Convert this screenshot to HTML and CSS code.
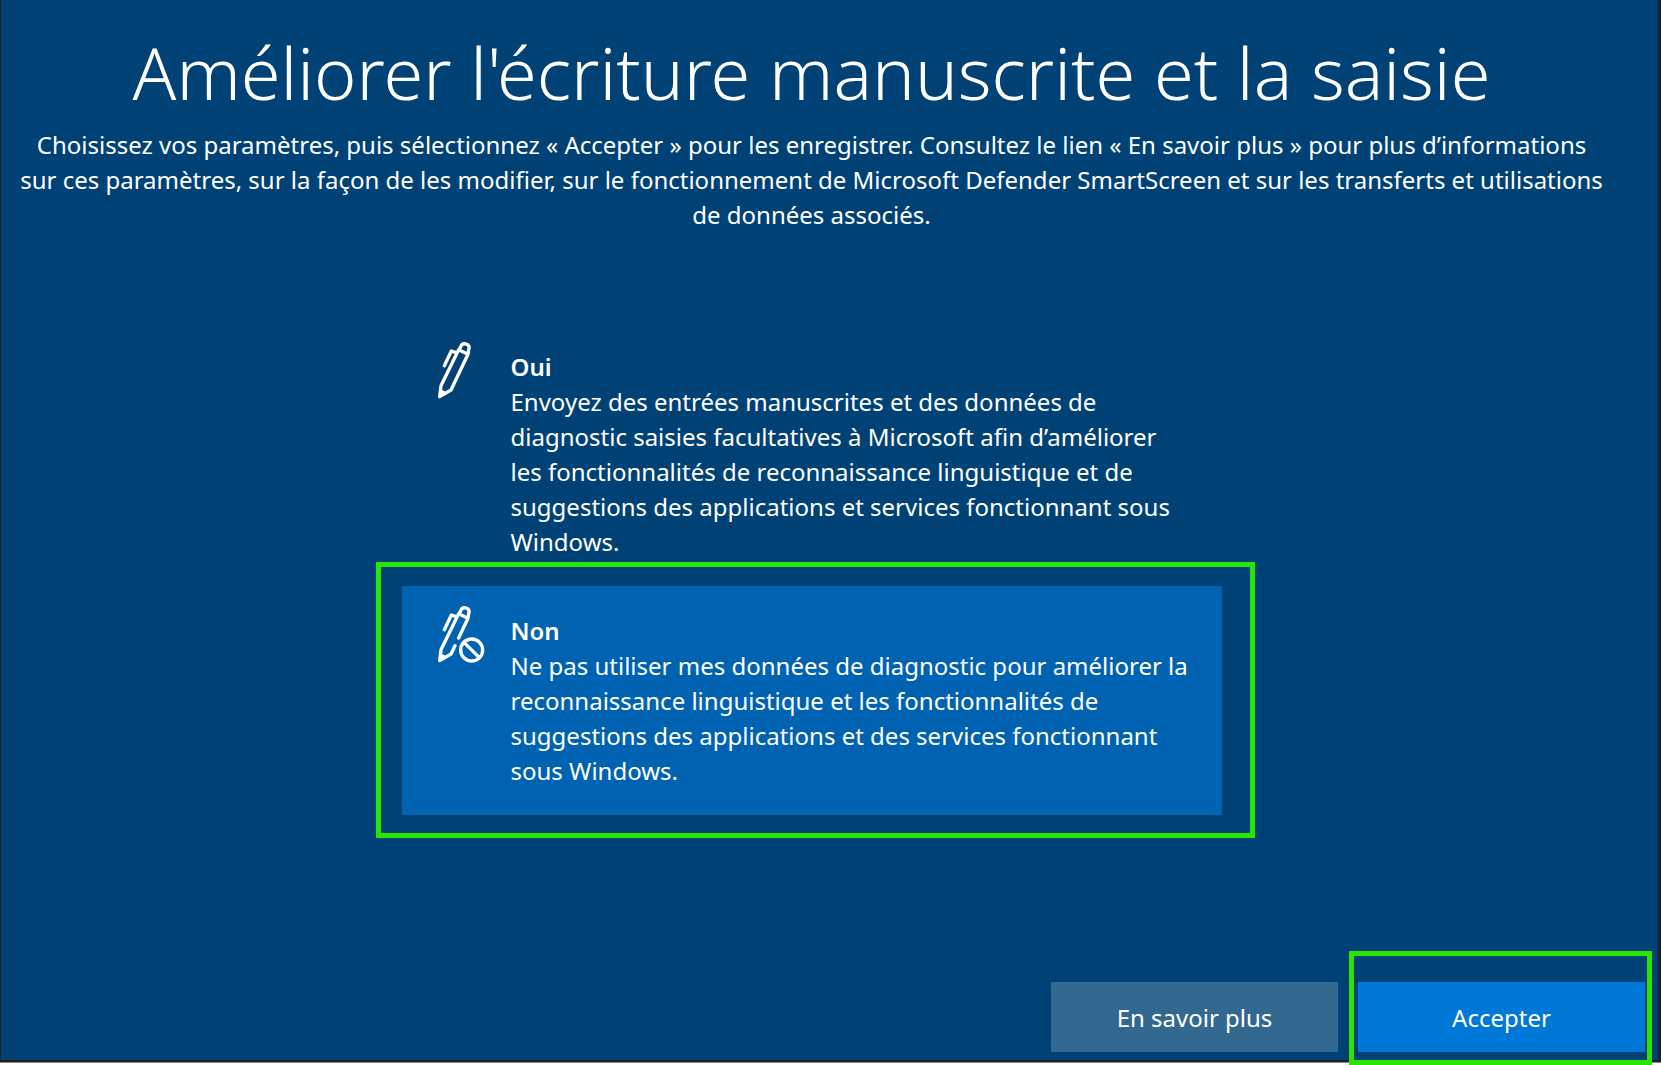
FILE: index.html
```html
<!DOCTYPE html>
<html lang="fr">
<head>
<meta charset="utf-8">
<meta name="viewport" content="width=device-width, initial-scale=1">
<title>Améliorer l'écriture manuscrite et la saisie</title>
<link rel="stylesheet" href="styles.css">
</head>
<body>
<form class="setup">
  <header class="intro">
    <h1 class="title">Améliorer l'écriture manuscrite et la saisie</h1>
    <p class="lead">Choisissez vos paramètres, puis sélectionnez « Accepter » pour les enregistrer. Consultez le lien « En savoir plus » pour plus d’informations<br>sur ces paramètres, sur la façon de les modifier, sur le fonctionnement de Microsoft Defender SmartScreen et sur les transferts et utilisations<br>de données associés.</p>
  </header>

  <main class="content">
    <div class="options">
      <label class="option">
        <input class="option-input" type="radio" name="saisie" value="oui">
        <svg class="icon" viewBox="54 36 144 171" aria-hidden="true">
          <path d="M62 200 L66 167 L119 59 L147 73 L96 180 Z M66 184 L78 190 M122 56 L128 44 Q134 39 143 43 Q152 47 150 55 L147 73 M76 107 L97 63 L112 68"/>
        </svg>
        <span class="option-text"><strong class="option-name">Oui</strong>Envoyez des entrées manuscrites et des données de<br>diagnostic saisies facultatives à Microsoft afin d’améliorer<br>les fonctionnalités de reconnaissance linguistique et de<br>suggestions des applications et services fonctionnant sous<br>Windows.</span>
      </label>
      <label class="option highlight">
        <input class="option-input" type="radio" name="saisie" value="non" checked>
        <svg class="icon" viewBox="54 36 144 171" aria-hidden="true">
          <path d="M119 132 L147 73 L119 59 L66 167 L62 200 L96 180 L108 155 M66 184 L78 190 M122 56 L128 44 Q134 39 143 43 Q152 47 150 55 L147 73 M76 107 L97 63 L112 68"/>
          <circle cx="158" cy="168" r="33"/>
          <path d="M135 145 L181 191"/>
        </svg>
        <span class="option-text"><strong class="option-name">Non</strong>Ne pas utiliser mes données de diagnostic pour améliorer la<br>reconnaissance linguistique et les fonctionnalités de<br>suggestions des applications et des services fonctionnant<br>sous Windows.</span>
      </label>
    </div>
  </main>

  <footer class="actions">
    <button class="button" type="button">En savoir plus</button>
    <span class="primary highlight"><button class="button button-accept" type="submit">Accepter</button></span>
  </footer>
</form>
</body>
</html>
```
FILE: styles.css
```css
* {
  box-sizing: border-box;
}

body {
  display: flex;
  flex-direction: column;
  min-height: 100vh;
  margin: 0;
  padding-bottom: 3px;
  background: #fff;
  color: #fff;
  font: 24px/35px "Noto Sans", "Open Sans", sans-serif;
}

.setup {
  display: flex;
  flex: 1;
  flex-direction: column;
  border: solid #1f1f1f;
  border-width: 0 3px 2px 1px;
  background: #004275;
  box-shadow: 0 1px #8c8c8c;
}

.intro {
  padding: 20px 36px 0 0;
  text-align: center;
  white-space: nowrap;
}

.title {
  margin: 0 0 3px;
  font-size: 72px;
  font-weight: 300;
  line-height: 104px;
}

.lead {
  margin: 0;
}

.content {
  padding: 90px 36px 0 0;
}

.options {
  width: 820px;
  max-width: 100%;
  margin: 0 auto;
}

.option {
  position: relative;
  display: flex;
  align-items: flex-start;
  gap: 26px;
  padding: 27px 0 27px 35px;
}

.option:has(.option-input:checked) {
  background: #0063b1;
}

.option-input {
  position: absolute;
  opacity: 0;
}

.icon {
  flex: none;
  width: 48px;
  height: 57px;
  margin-top: -7px;
  fill: none;
  stroke: #fff;
  stroke-width: 10;
  stroke-linejoin: round;
  stroke-linecap: round;
}

.option-text {
  white-space: nowrap;
}

.option-name {
  display: block;
  font-weight: 600;
}

.actions {
  display: flex;
  justify-content: flex-end;
  gap: 20px;
  margin-top: auto;
  padding: 0 13px 8px;
}

.button {
  display: block;
  width: 287px;
  height: 70px;
  padding: 0;
  border: 0;
  background: #336890;
  color: inherit;
  font: inherit;
}

.button-accept {
  background: #0078d7;
}

.primary {
  position: relative;
}

/* Green frame drawn around the choice to make */
.highlight::after {
  content: "";
  position: absolute;
  inset: -24px -33px -23px -26px;
  border: 5px solid #26e600;
  pointer-events: none;
}

.primary::after {
  inset: -31px -7px -13px -9px;
}
```
